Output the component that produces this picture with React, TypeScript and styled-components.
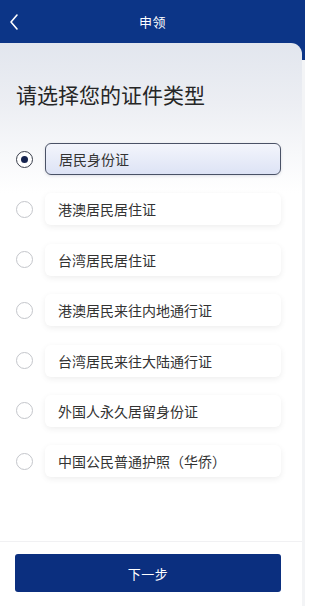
import { useState } from "react";
import styled, { createGlobalStyle } from "styled-components";

const OPTIONS = [
  "居民身份证",
  "港澳居民居住证",
  "台湾居民居住证",
  "港澳居民来往内地通行证",
  "台湾居民来往大陆通行证",
  "外国人永久居留身份证",
  "中国公民普通护照（华侨）",
];

export default function App() {
  const [selected, setSelected] = useState(0);

  return (
    <>
      <GlobalStyle />
      <Page>
        <Header>
          <BackButton type="button" aria-label="返回">
            <svg width="12" height="18" viewBox="0 0 12 18" fill="none">
              <path
                d="M9 2 L3 9 L9 16"
                stroke="#ffffff"
                strokeWidth="1.6"
                strokeLinecap="round"
                strokeLinejoin="round"
              />
            </svg>
          </BackButton>
          <HeaderTitle>申领</HeaderTitle>
          <span />
        </Header>

        <Card>
          <Title>请选择您的证件类型</Title>

          <OptionList>
            {OPTIONS.map((label, i) => (
              <OptionRow key={label} onClick={() => setSelected(i)}>
                <Radio $checked={selected === i} />
                <OptionBox $checked={selected === i}>{label}</OptionBox>
              </OptionRow>
            ))}
          </OptionList>

          <Footer>
            <NextButton type="button">下一步</NextButton>
          </Footer>
        </Card>
      </Page>
    </>
  );
}

const GlobalStyle = createGlobalStyle`
  html, body {
    margin: 0;
    padding: 0;
  }
  body {
    font-family: "Noto Sans CJK SC", "Noto Sans", sans-serif;
  }
`;

// blue only behind the header and the card's rounded corner
const Page = styled.div`
  display: flex;
  flex-direction: column;
  width: 305px;
  height: 606px;
  background: linear-gradient(180deg, #0c3587 0, #0c3587 60px, #f3f4f6 60px);
`;

const Header = styled.div`
  display: grid;
  grid-template-columns: 40px 1fr 40px;
  align-items: center;
  height: 43px;
  color: #ffffff;
`;

const BackButton = styled.button`
  appearance: none;
  display: flex;
  align-items: center;
  border: 0;
  background: transparent;
  padding: 0 0 0 8px;
  height: 100%;
`;

const HeaderTitle = styled.div`
  text-align: center;
  font-size: 13px;
  letter-spacing: 0.5px;
`;

const Card = styled.div`
  flex: 1;
  display: flex;
  flex-direction: column;
  margin-right: 3px;
  border-top-right-radius: 11px;
  background: linear-gradient(
    180deg,
    #e2e6ee 0,
    #eceef3 60px,
    #f7f8fa 110px,
    #ffffff 150px
  );
`;

const Title = styled.h1`
  margin: 0;
  padding: 37px 0 0 16px;
  font-size: 21px;
  font-weight: 400;
  line-height: 28px;
  color: #262626;
`;

const OptionList = styled.div`
  display: flex;
  flex-direction: column;
  gap: 18.4px;
  margin-top: 35px;
`;

const OptionRow = styled.div`
  display: flex;
  align-items: center;
  padding-left: 16px;
  cursor: pointer;
`;

const Radio = styled.span<{ $checked: boolean }>`
  display: grid;
  place-items: center;
  box-sizing: border-box;
  width: 17px;
  height: 17px;
  margin-right: 12px;
  border-radius: 50%;
  border: 1px solid ${(p) => (p.$checked ? "#3a3f4c" : "#c4c6cb")};
  background: #ffffff;

  &::after {
    content: "";
    display: ${(p) => (p.$checked ? "block" : "none")};
    width: 7px;
    height: 7px;
    border-radius: 50%;
    background: #16244f;
  }
`;

const OptionBox = styled.div<{ $checked: boolean }>`
  box-sizing: border-box;
  display: flex;
  align-items: center;
  width: 236px;
  height: 32px;
  padding-left: 13px;
  border-radius: 6px;
  font-size: 14px;
  color: #333333;
  border: ${(p) => (p.$checked ? "1.5px solid #4a5266" : "0")};
  background: ${(p) =>
    p.$checked
      ? "linear-gradient(180deg, #f3f5fc 0%, #dde3f5 100%)"
      : "#ffffff"};
  box-shadow: ${(p) =>
    p.$checked
      ? "0 1px 3px rgba(40, 50, 90, 0.15)"
      : "0 2px 6px rgba(0, 0, 0, 0.07)"};
`;

const Footer = styled.div`
  margin-top: auto;
  border-top: 1px solid #f1f1f3;
  padding: 12px 21px 14px 15px;
`;

const NextButton = styled.button`
  appearance: none;
  display: block;
  width: 100%;
  height: 38px;
  border: 0;
  border-radius: 3px;
  background: #0b2f7f;
  color: #ffffff;
  font: inherit;
  font-size: 13px;
  letter-spacing: 0.5px;
  cursor: pointer;
`;
